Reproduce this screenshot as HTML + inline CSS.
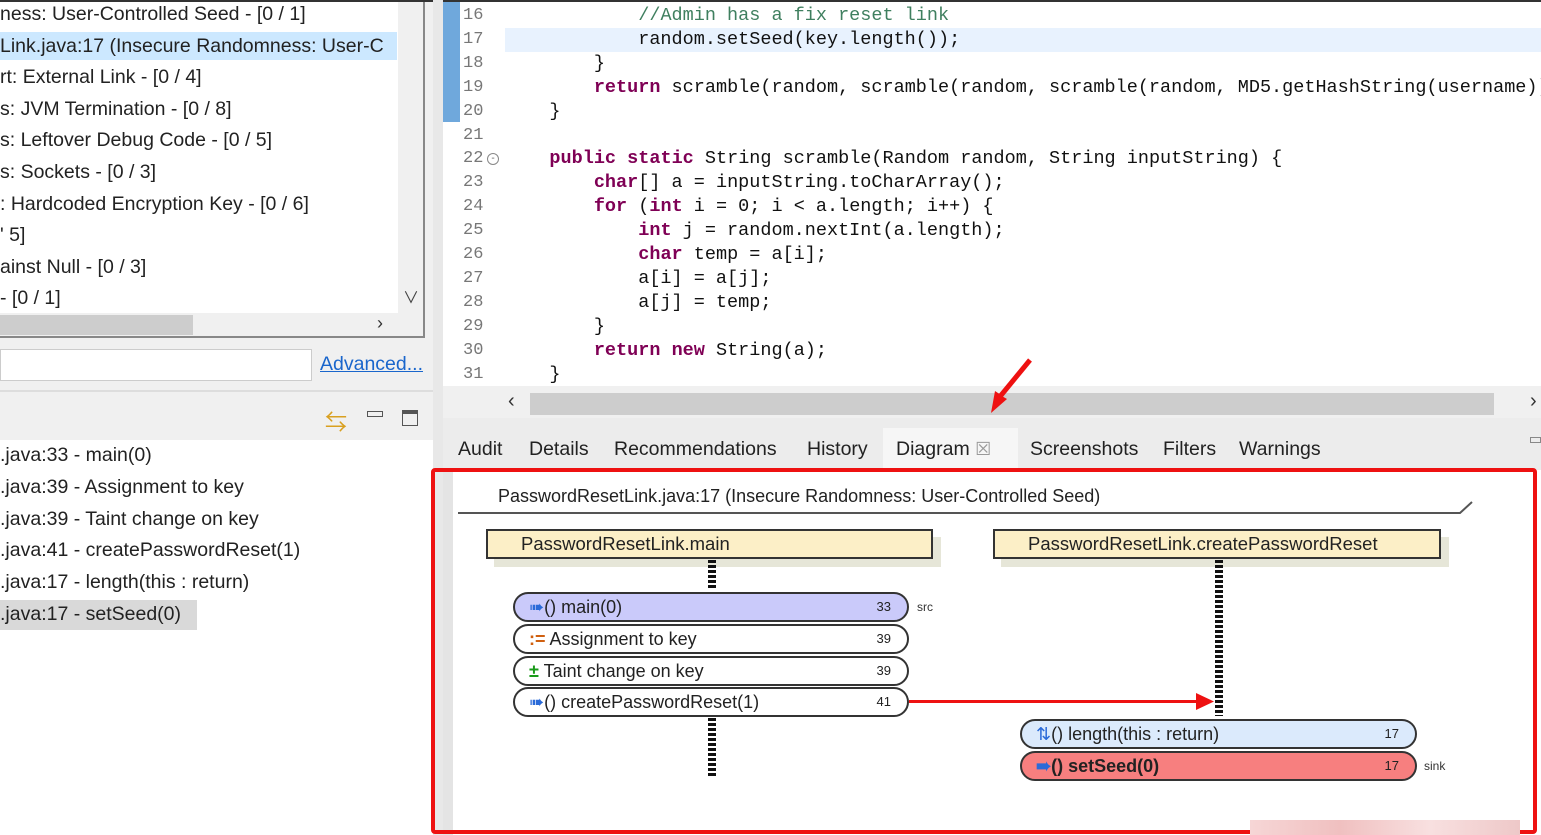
<!DOCTYPE html>
<html><head><meta charset="utf-8"><style>
*{margin:0;padding:0;box-sizing:border-box}
body{width:1541px;height:835px;overflow:hidden;background:#fff;position:relative;font-family:"Liberation Sans",sans-serif}
.a{position:absolute}
.ui{font-family:"Liberation Sans","Noto Sans CJK SC",sans-serif;font-size:19.5px;color:#222;white-space:nowrap}
.code{font-family:"Liberation Mono",monospace;font-size:18.5px;white-space:pre;color:#111;line-height:23.9px}
.k{color:#7f0055;font-weight:bold}
.c{color:#3f7f5f}
.ln{font-family:"Liberation Mono",monospace;font-size:17px;color:#777;line-height:23.9px;white-space:pre}
.pill{position:absolute;height:30px;border:2px solid #333;border-radius:15px;font-size:18px;color:#222;white-space:nowrap;line-height:26px;padding-left:14px}
.pill .n{position:absolute;right:16px;top:0;font-size:13px}
.box{position:absolute;height:30px;background:#fcefc7;border:2px solid #333;font-size:18.5px;color:#222;line-height:26px;box-shadow:8px 8px 0 #e6e6d8}
.dash{position:absolute;width:8px;background:repeating-linear-gradient(#111 0 3px,transparent 3px 5px)}
</style></head><body>
<div class="a" style="left:0;top:0;width:1541px;height:2px;background:#333"></div>

<!-- left panel -->
<div class="a" style="left:0;top:2px;width:433px;height:833px;background:#f0f0f0"></div>
<div class="a" style="left:0;top:2px;width:425px;height:336px;background:#fff;border-right:2px solid #888;border-bottom:2px solid #888"></div>
<div class="a" style="left:0;top:32px;width:397px;height:28px;background:#cce8ff"></div>
<div class="a ui" style="left:0;top:-1px;line-height:31.6px">
<div>ness: User-Controlled Seed - [0 / 1]</div>
<div>Link.java:17 (Insecure Randomness: User-C</div>
<div>rt: External Link - [0 / 4]</div>
<div>s: JVM Termination - [0 / 8]</div>
<div>s: Leftover Debug Code - [0 / 5]</div>
<div>s: Sockets - [0 / 3]</div>
<div>: Hardcoded Encryption Key - [0 / 6]</div>
<div>' 5]</div>
<div>ainst Null - [0 / 3]</div>
<div>- [0 / 1]</div>
</div>
<div class="a" style="left:398px;top:2px;width:25px;height:311px;background:#f0f0f0"></div>
<div class="a ui" style="left:403px;top:284px;font-size:16px;color:#444">&#x2228;</div>
<div class="a" style="left:0;top:313px;width:423px;height:23px;background:#f0f0f0"></div>
<div class="a" style="left:0;top:315px;width:193px;height:20px;background:#cdcdcd"></div>
<div class="a ui" style="left:377px;top:313px;font-size:18px;color:#333">&#x203A;</div>
<div class="a" style="left:0;top:349px;width:312px;height:32px;background:#fff;border:1px solid #ccc"></div>
<div class="a ui" style="left:320px;top:353px;color:#1a66cc;text-decoration:underline">Advanced...</div>
<div class="a" style="left:0;top:390px;width:435px;height:2px;background:#ddd"></div>
<div class="a" style="left:0;top:440px;width:433px;height:395px;background:#fff"></div>
<div class="a ui" style="left:325px;top:405px;color:#d9a020;font-size:22px">&#x21C6;</div>
<div class="a" style="left:367px;top:411px;width:16px;height:6px;border:1.5px solid #555"></div>
<div class="a" style="left:402px;top:410px;width:16px;height:16px;border:1.5px solid #555;border-top-width:4px"></div>
<div class="a" style="left:0;top:600px;width:197px;height:30px;background:#d9d9d9"></div>
<div class="a ui" style="left:0;top:440px;line-height:31.8px">
<div>.java:33 - main(0)</div>
<div>.java:39 - Assignment to key</div>
<div>.java:39 - Taint change on key</div>
<div>.java:41 - createPasswordReset(1)</div>
<div>.java:17 - length(this : return)</div>
<div>.java:17 - setSeed(0)</div>
</div>
<div class="a" style="left:433px;top:0;width:10px;height:835px;background:#e8e8e8"></div>

<!-- editor -->
<div class="a" style="left:443px;top:2px;width:17px;height:120px;background:#6fa8dc"></div>
<div class="a" style="left:505px;top:28px;width:1036px;height:24px;background:#e8f2fe"></div>
<div class="a ln" style="left:463px;top:4px">16
17
18
19
20
21
22
23
24
25
26
27
28
29
30
31</div>
<div class="a" style="left:487px;top:153px;width:12px;height:12px;border:1px solid #888;border-radius:50%;font-size:10px;line-height:9px;text-align:center;color:#666">-</div>
<div class="a code" style="left:505px;top:4px">            <span class="c">//Admin has a fix reset link</span>
            random.setSeed(key.length());
        }
        <span class="k">return</span> scramble(random, scramble(random, scramble(random, MD5.getHashString(username)));
    }

    <span class="k">public</span> <span class="k">static</span> String scramble(Random random, String inputString) {
        <span class="k">char</span>[] a = inputString.toCharArray();
        <span class="k">for</span> (<span class="k">int</span> i = 0; i &lt; a.length; i++) {
            <span class="k">int</span> j = random.nextInt(a.length);
            <span class="k">char</span> temp = a[i];
            a[i] = a[j];
            a[j] = temp;
        }
        <span class="k">return</span> <span class="k">new</span> String(a);
    }</div>
<div class="a" style="left:443px;top:386px;width:1098px;height:32px;background:#f0f0f0"></div>
<div class="a" style="left:530px;top:393px;width:964px;height:22px;background:#cdcdcd"></div>
<div class="a ui" style="left:508px;top:390px;font-size:20px;color:#333">&#x2039;</div>
<div class="a ui" style="left:1530px;top:390px;font-size:20px;color:#333">&#x203A;</div>
<svg class="a" style="left:985px;top:355px" width="50" height="62"><path d="M45 5 L15 40 L22 44 L6 58 L10 36 L16 40 Z" fill="#ee1111"/><path d="M45 5 L13 44" stroke="#ee1111" stroke-width="5"/></svg>

<!-- tabs -->
<div class="a" style="left:443px;top:418px;width:1098px;height:52px;background:#ececec"></div>
<div class="a" style="left:883px;top:428px;width:135px;height:42px;background:#f6f6f6"></div>
<div class="a ui" style="left:458px;top:438px">Audit</div>
<div class="a ui" style="left:529px;top:438px">Details</div>
<div class="a ui" style="left:614px;top:438px">Recommendations</div>
<div class="a ui" style="left:807px;top:438px">History</div>
<div class="a ui" style="left:896px;top:438px">Diagram <span style="color:#999;font-size:18px">&#x2612;</span></div>
<div class="a ui" style="left:1030px;top:438px">Screenshots</div>
<div class="a ui" style="left:1163px;top:438px">Filters</div>
<div class="a ui" style="left:1239px;top:438px">Warnings</div>
<div class="a" style="left:1530px;top:437px;width:11px;height:6px;border:1px solid #888"></div>

<!-- diagram -->
<div class="a" style="left:443px;top:470px;width:10px;height:365px;background:#e4e4e4"></div>
<div class="a" style="left:498px;top:486px;font-size:18px;color:#222;white-space:nowrap">PasswordResetLink.java:17 (Insecure Randomness: User-Controlled Seed)</div>
<svg class="a" style="left:455px;top:498px" width="1025" height="20"><path d="M3 15 L1005 15 L1017 4" stroke="#555" stroke-width="2" fill="none"/></svg>
<div class="box" style="left:486px;top:529px;width:447px;padding-left:33px">PasswordResetLink.main</div>
<div class="box" style="left:993px;top:529px;width:448px;padding-left:33px">PasswordResetLink.createPasswordReset</div>
<div class="dash" style="left:708px;top:560px;height:29px"></div>
<div class="dash" style="left:708px;top:718px;height:60px"></div>
<div class="dash" style="left:1215px;top:560px;height:156px"></div>

<div class="pill" style="left:513px;top:592px;width:396px;background:#cacafa">
<span style="color:#2a6ad8">&#x27A0;</span>() main(0)<span class="n">33</span></div>
<div class="a" style="left:917px;top:600px;font-size:12px;color:#333">src</div>
<div class="pill" style="left:513px;top:624px;width:396px;background:#fff">
<span style="color:#d06010;font-weight:bold">:=</span> Assignment to key<span class="n">39</span></div>
<div class="pill" style="left:513px;top:656px;width:396px;background:#fff">
<span style="color:#1a9a1a;font-weight:bold">&#x00B1;</span> Taint change on key<span class="n">39</span></div>
<div class="pill" style="left:513px;top:687px;width:396px;background:#fff">
<span style="color:#2a6ad8">&#x27A0;</span>() createPasswordReset(1)<span class="n">41</span></div>
<div class="a" style="left:909px;top:700px;width:290px;height:3px;background:#ee1111"></div>
<svg class="a" style="left:1196px;top:692px" width="20" height="20"><path d="M0 1 L18 9.5 L0 18 Z" fill="#ee1111"/></svg>
<div class="pill" style="left:1020px;top:719px;width:397px;background:#dbeafc">
<span style="color:#2a6ad8">&#x21C5;</span>() length(this : return)<span class="n">17</span></div>
<div class="pill" style="left:1020px;top:751px;width:397px;background:#f77f7f;font-weight:bold">
<span style="color:#2a6ad8">&#x27A0;</span>() setSeed(0)<span class="n" style="font-weight:normal">17</span></div>
<div class="a" style="left:1424px;top:759px;font-size:12px;color:#333">sink</div>

<!-- red annotation rect -->
<div class="a" style="left:431px;top:468px;width:1106px;height:366px;border:4px solid #ee1111;border-radius:4px"></div>
<div class="a" style="left:1250px;top:820px;width:270px;height:15px;background:linear-gradient(90deg,#f6d6d6,#f0c0c0,#f8e0e0,#eec8c8)"></div>
</body></html>
